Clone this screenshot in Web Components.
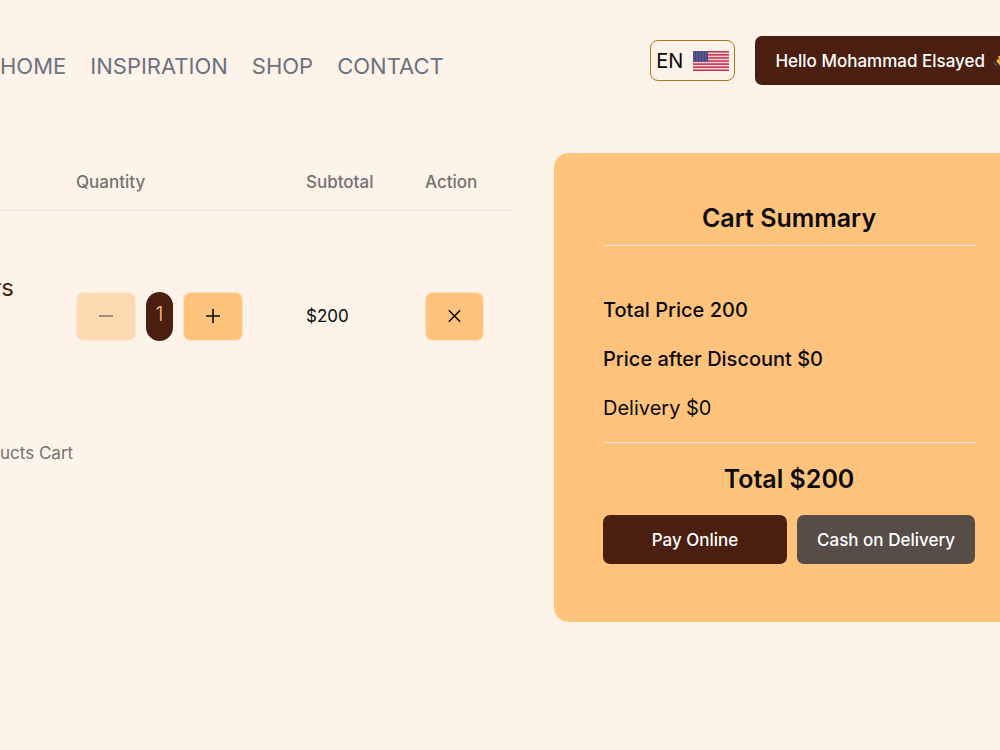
<!DOCTYPE html>
<html lang="en">
<head>
<meta charset="utf-8">
<meta name="viewport" content="width=device-width, initial-scale=1">
<title>Cart</title>
<style>
  body {
    --cream: #fef3e8;
    --orange: #ffc37c;
    --brown: #4a1f0f;
    --ink: #0c0a09;
    --muted: #737373;
    --line: #e5e7eb;
    margin: 0;
    min-height: 100vh;
    overflow-x: hidden;
    background: var(--cream);
    color: var(--ink);
    font-family: Inter, "Liberation Sans", sans-serif;
    font-size: 17px;
    line-height: 24px;
  }
</style>
</head>
<body>
<cart-page>
  <site-header slot="header" user="Mohammad Elsayed"></site-header>
  <cart-table price="200"></cart-table>
  <cart-summary slot="aside" total="200" discount="0" delivery="0"></cart-summary>
</cart-page>

<script>
class CartPage extends HTMLElement {
  constructor() {
    super();
    const shadow = this.attachShadow({ mode: "open" });
    shadow.innerHTML = /* html */`
    <style>
      :host {
        display: block;
        overflow: hidden;
      }

      main {
        display: grid;
        grid-template-columns: minmax(0, 1fr) 470px;
        gap: 40px;
        align-items: start;
        margin: 68px -24px 0 0;
      }
    </style>
    <slot name="header"></slot>
    <main>
      <slot></slot>
      <slot name="aside"></slot>
    </main>
    `;
  }
}

class AppButton extends HTMLElement {
  constructor() {
    super();
    const shadow = this.attachShadow({ mode: "open" });
    shadow.innerHTML = /* html */`
    <style>
      :host {
        display: block;
      }

      button {
        display: flex;
        align-items: center;
        justify-content: center;
        gap: 8px;
        width: 100%;
        height: 49px;
        padding: 0 19px;
        border: 1px solid transparent;
        border-radius: 7px;
        background: var(--brown);
        color: #fff;
        font: inherit;
        font-weight: 500;
        white-space: nowrap;
        cursor: pointer;
      }

      :host([variant="grey"]) button {
        background: #564d49;
      }

      :host([variant="light"]) button {
        background: var(--orange);
        background-clip: padding-box;
        border-color: #fbe0c2;
        color: var(--ink);
      }

      button:disabled {
        opacity: 0.5;
        cursor: default;
      }
    </style>
    <button type="button"><slot></slot></button>
    `;
    this.$button = shadow.querySelector("button");
  }

  connectedCallback() {
    this.$button.disabled = this.hasAttribute("disabled");
    if (this.getAttribute("label")) {
      this.$button.setAttribute("aria-label", this.getAttribute("label"));
    }
  }
}

class UsFlag extends HTMLElement {
  constructor() {
    super();
    const shadow = this.attachShadow({ mode: "open" });
    const stripes = [0, 2, 4, 6, 8, 10, 12]
      .map((row) => `<rect y="${row * 1.54}" width="36" height="1.54" fill="#c8324f"/>`)
      .join("");
    shadow.innerHTML = /* html */`
    <style>
      :host, svg {
        display: block;
      }
    </style>
    <svg width="36" height="20" viewBox="0 0 36 20" aria-hidden="true">
      <defs>
        <pattern id="stars" width="3" height="2" patternUnits="userSpaceOnUse">
          <circle cx="1" cy="1" r="0.5" fill="#a3a1c4"/>
        </pattern>
      </defs>
      <rect width="36" height="20" fill="#ecd3d8"/>
      ${stripes}
      <rect width="15" height="10.8" fill="#46467f"/>
      <rect width="15" height="10.8" fill="url(#stars)"/>
    </svg>
    `;
  }
}

class SiteHeader extends HTMLElement {
  constructor() {
    super();
    const shadow = this.attachShadow({ mode: "open" });
    shadow.innerHTML = /* html */`
    <style>
      :host {
        display: block;
      }

      header {
        display: flex;
        align-items: center;
        justify-content: space-between;
        margin-right: -35px;
        padding-top: 36px;
      }

      nav {
        display: flex;
        gap: 24px;
        padding-top: 10px;
        font-size: 22px;
      }

      nav a {
        color: #6b7280;
        text-decoration: none;
      }

      .tools {
        display: flex;
        align-items: center;
        gap: 20px;
      }

      .lang {
        display: flex;
        align-items: center;
        gap: 10px;
        height: 41px;
        padding: 0 5px;
        border: 1px solid #b4761d;
        border-radius: 8px;
        background: none;
        color: var(--ink);
        font: inherit;
        font-size: 20px;
      }

      .wave {
        display: block;
      }
    </style>
    <header>
      <nav>
        <a href="#home">HOME</a>
        <a href="#inspiration">INSPIRATION</a>
        <a href="#shop">SHOP</a>
        <a href="#contact">CONTACT</a>
      </nav>
      <div class="tools">
        <button class="lang" type="button">EN <us-flag></us-flag></button>
        <app-button>
          <span class="hello"></span>
          <svg class="wave" width="22" height="22" viewBox="0 0 22 22" aria-hidden="true">
            <path d="M1 12q1 3 4 4" fill="none" stroke="#35566b" stroke-width="1.6"/>
            <path d="M4 10q1-2 3 0L5 7q1-2 3-1l4 4-3-6q2-2 3 0l4 7 1-4q2-1 2 2l-1 7q-4 5-9 2l-5-6q-1-1 0-2z" fill="#ffb42e"/>
          </svg>
        </app-button>
      </div>
    </header>
    `;
    this.$hello = shadow.querySelector(".hello");
  }

  connectedCallback() {
    this.$hello.textContent = `Hello ${this.getAttribute("user")}`;
  }
}

class QuantityPicker extends HTMLElement {
  constructor() {
    super();
    const shadow = this.attachShadow({ mode: "open" });
    shadow.innerHTML = /* html */`
    <style>
      :host {
        display: flex;
        gap: 10px;
      }

      app-button {
        width: 60px;
      }

      output {
        width: 27px;
        height: 49px;
        border-radius: 14px;
        background: var(--brown);
        color: var(--orange);
        font-size: 20px;
        font-weight: 300;
        line-height: 45px;
        text-align: center;
      }
    </style>
    <app-button variant="light" label="Decrease" disabled>
      <svg width="20" height="20" viewBox="0 0 20 20" fill="none" stroke="currentColor" stroke-width="1.6"><path d="M3 10h14"/></svg>
    </app-button>
    <output>1</output>
    <app-button variant="light" label="Increase">
      <svg width="20" height="20" viewBox="0 0 20 20" fill="none" stroke="currentColor" stroke-width="1.6"><path d="M3 10h14M10 3v14"/></svg>
    </app-button>
    `;
  }
}

class CartTable extends HTMLElement {
  constructor() {
    super();
    const shadow = this.attachShadow({ mode: "open" });
    shadow.innerHTML = /* html */`
    <style>
      :host {
        display: block;
      }

      table {
        width: 100%;
        table-layout: fixed;
        border-collapse: collapse;
      }

      caption {
        caption-side: bottom;
        padding-top: 20px;
        color: var(--muted);
        text-align: left;
        white-space: nowrap;
      }

      th, td {
        padding: 0 20px;
        text-align: left;
      }

      th {
        height: 57px;
        border-bottom: 1px solid var(--line);
        color: var(--muted);
        font-weight: 500;
      }

      td {
        height: 210px;
      }

      .qty { width: 190px; }
      .sub { width: 79px; }
      .act { width: 69px; }

      td.name {
        height: 154px;
        padding: 0 0 56px;
        color: var(--brown);
        font-size: 24px;
      }

      .name div {
        display: flex;
        justify-content: flex-end;
        width: 14px;
        overflow: hidden;
      }

      td app-button {
        width: 59px;
      }
    </style>
    <table>
      <caption>ucts Cart</caption>
      <thead>
        <tr>
          <th></th>
          <th class="qty">Quantity</th>
          <th class="sub">Subtotal</th>
          <th class="act">Action</th>
        </tr>
      </thead>
      <tbody>
        <tr>
          <td class="name"><div>rs</div></td>
          <td><quantity-picker></quantity-picker></td>
          <td class="price"></td>
          <td>
            <app-button variant="light" label="Remove">
              <svg width="20" height="20" viewBox="0 0 20 20" fill="none" stroke="currentColor" stroke-width="1.6"><path d="M4 4l12 12M16 4L4 16"/></svg>
            </app-button>
          </td>
        </tr>
      </tbody>
    </table>
    `;
    this.$price = shadow.querySelector(".price");
  }

  connectedCallback() {
    this.$price.textContent = `$${this.getAttribute("price")}`;
  }
}

class CartSummary extends HTMLElement {
  constructor() {
    super();
    this.attachShadow({ mode: "open" });
  }

  connectedCallback() {
    const total = this.getAttribute("total");
    this.shadowRoot.innerHTML = /* html */`
    <style>
      :host {
        display: block;
        box-sizing: border-box;
        padding: 49px 49px 58px;
        border-radius: 15px;
        background: var(--orange);
      }

      h2, .total {
        margin: 0;
        font-size: 25px;
        font-weight: 600;
        line-height: 32px;
        text-align: center;
      }

      h2 {
        padding-bottom: 11px;
        border-bottom: 1px solid var(--line);
      }

      .lines {
        display: grid;
        gap: 20px;
        padding: 50px 0 19px;
        border-bottom: 1px solid var(--line);
        font-size: 20px;
        font-weight: 500;
        line-height: 29px;
      }

      .lines p {
        margin: 0;
      }

      .lines .delivery {
        font-weight: 400;
      }

      .total {
        padding: 20px 0;
      }

      .actions {
        display: flex;
        gap: 10px;
      }

      .actions :first-child {
        flex: 1;
      }
    </style>
    <h2>Cart Summary</h2>
    <div class="lines">
      <p>Total Price ${total}</p>
      <p>Price after Discount $${this.getAttribute("discount")}</p>
      <p class="delivery">Delivery $${this.getAttribute("delivery")}</p>
    </div>
    <p class="total">Total $${total}</p>
    <div class="actions">
      <app-button>Pay Online</app-button>
      <app-button variant="grey">Cash on Delivery</app-button>
    </div>
    `;
  }
}

customElements.define("app-button", AppButton);
customElements.define("us-flag", UsFlag);
customElements.define("quantity-picker", QuantityPicker);
customElements.define("site-header", SiteHeader);
customElements.define("cart-table", CartTable);
customElements.define("cart-summary", CartSummary);
customElements.define("cart-page", CartPage);
</script>
</body>
</html>
